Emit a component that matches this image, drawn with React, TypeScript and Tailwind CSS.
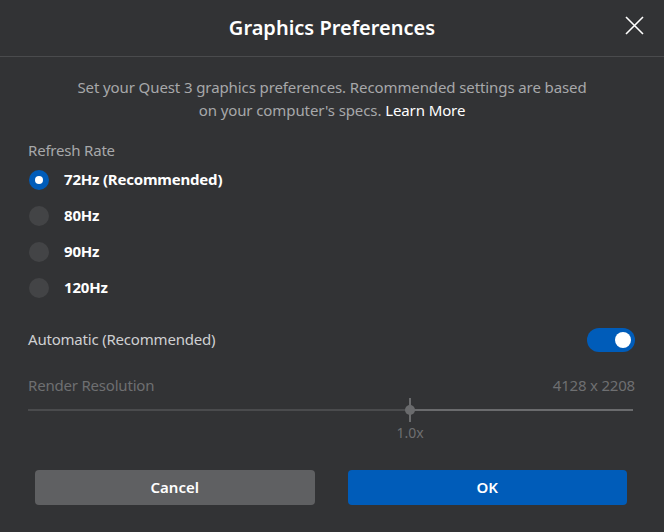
import { useState } from "react";

const rates = ["72Hz (Recommended)", "80Hz", "90Hz", "120Hz"];

const App = () => {
  const [rate, setRate] = useState<number>(0);
  const [auto, setAuto] = useState<boolean>(true);

  return (
    <div
      className="flex h-[532px] w-[664px] flex-col bg-[#323335] text-white"
      style={{ fontFamily: '"Noto Sans", "Open Sans", sans-serif' }}
    >
      {/* header */}
      <div className="relative flex h-[57px] items-center justify-center border-b border-[#4a4b4d]">
        <h1 className="text-[20px] font-semibold tracking-[0px] text-white">
          Graphics Preferences
        </h1>
        <button className="absolute right-[20px] top-[16px] text-white">
          <svg width="19" height="19" viewBox="0 0 19 19" fill="none">
            <path d="M1 1L18 18M18 1L1 18" stroke="currentColor" strokeWidth="1.6" />
          </svg>
        </button>
      </div>

      <div className="flex flex-1 flex-col px-[28px]">
        <p className="mt-[19px] text-center text-[15px] leading-[23px] tracking-[-0.1px] text-[#a7a8aa]">
          Set your Quest 3 graphics preferences. Recommended settings are based
          <br />
          on your computer's specs. <span className="text-white">Learn More</span>
        </p>

        <div className="mt-[17px] text-[15px] tracking-[-0.2px] text-[#a7a8aa]">Refresh Rate</div>

        <div className="flex flex-col">
          {rates.map((r, i) => (
            <label
              key={r}
              onClick={() => setRate(i)}
              className="flex h-[36px] cursor-pointer items-center gap-[15px] pl-[1px]"
            >
              {rate === i ? (
                <span className="flex h-[20px] w-[20px] items-center justify-center rounded-full bg-[#005cb9]">
                  <span className="h-[8px] w-[8px] rounded-full bg-white" />
                </span>
              ) : (
                <span className="h-[20px] w-[20px] rounded-full bg-[#434446]" />
              )}
              <span className="text-[15px] font-bold tracking-[-0.2px] text-white">{r}</span>
            </label>
          ))}
        </div>

        <div className="mt-[22px] flex items-center justify-between">
          <span className="text-[15px] tracking-[-0.2px] text-[#cfd0d2]">Automatic (Recommended)</span>
          <button
            onClick={() => setAuto(!auto)}
            className={`mr-[1px] flex h-[24px] w-[48px] items-center rounded-full px-[4px] ${
              auto ? "justify-end bg-[#005cb9]" : "justify-start bg-[#5f6062]"
            }`}
          >
            <span className="h-[16px] w-[16px] rounded-full bg-white" />
          </button>
        </div>

        <div className="mt-[22px] flex items-center justify-between pr-[1px] text-[15px] tracking-[-0.2px] text-[#6e6f71]">
          <span>Render Resolution</span>
          <span>4128 x 2208</span>
        </div>

        <div className="relative mr-[3px] mt-[2px] h-[24px]">
          <div className="absolute left-0 right-0 top-[11px] flex h-[2px]">
            <div className="h-full w-[382px] bg-[#4a4b4d]" />
            <div className="h-full flex-1 bg-[#6a6b6d]" />
          </div>
          <div className="absolute left-[381px] top-0 h-[24px] w-[2px] bg-[#6a6b6d]" />
          <div className="absolute left-[377px] top-[7px] h-[10px] w-[10px] rounded-full bg-[#6a6b6d]" />
        </div>
        <div className="relative h-[20px]">
          <span className="absolute left-[382px] top-[0px] -translate-x-1/2 text-[14px] text-[#6e6f71]">
            1.0x
          </span>
        </div>

        <div className="mt-[28px] flex gap-[33px] pl-[7px] pr-[9px]">
          <button className="h-[35px] flex-1 rounded-[4px] bg-[#5f6062] text-[15px] font-semibold text-white">
            Cancel
          </button>
          <button className="h-[35px] flex-1 rounded-[4px] bg-[#005cb9] text-[15px] font-semibold text-white">
            OK
          </button>
        </div>
      </div>
    </div>
  );
};

export default App;
